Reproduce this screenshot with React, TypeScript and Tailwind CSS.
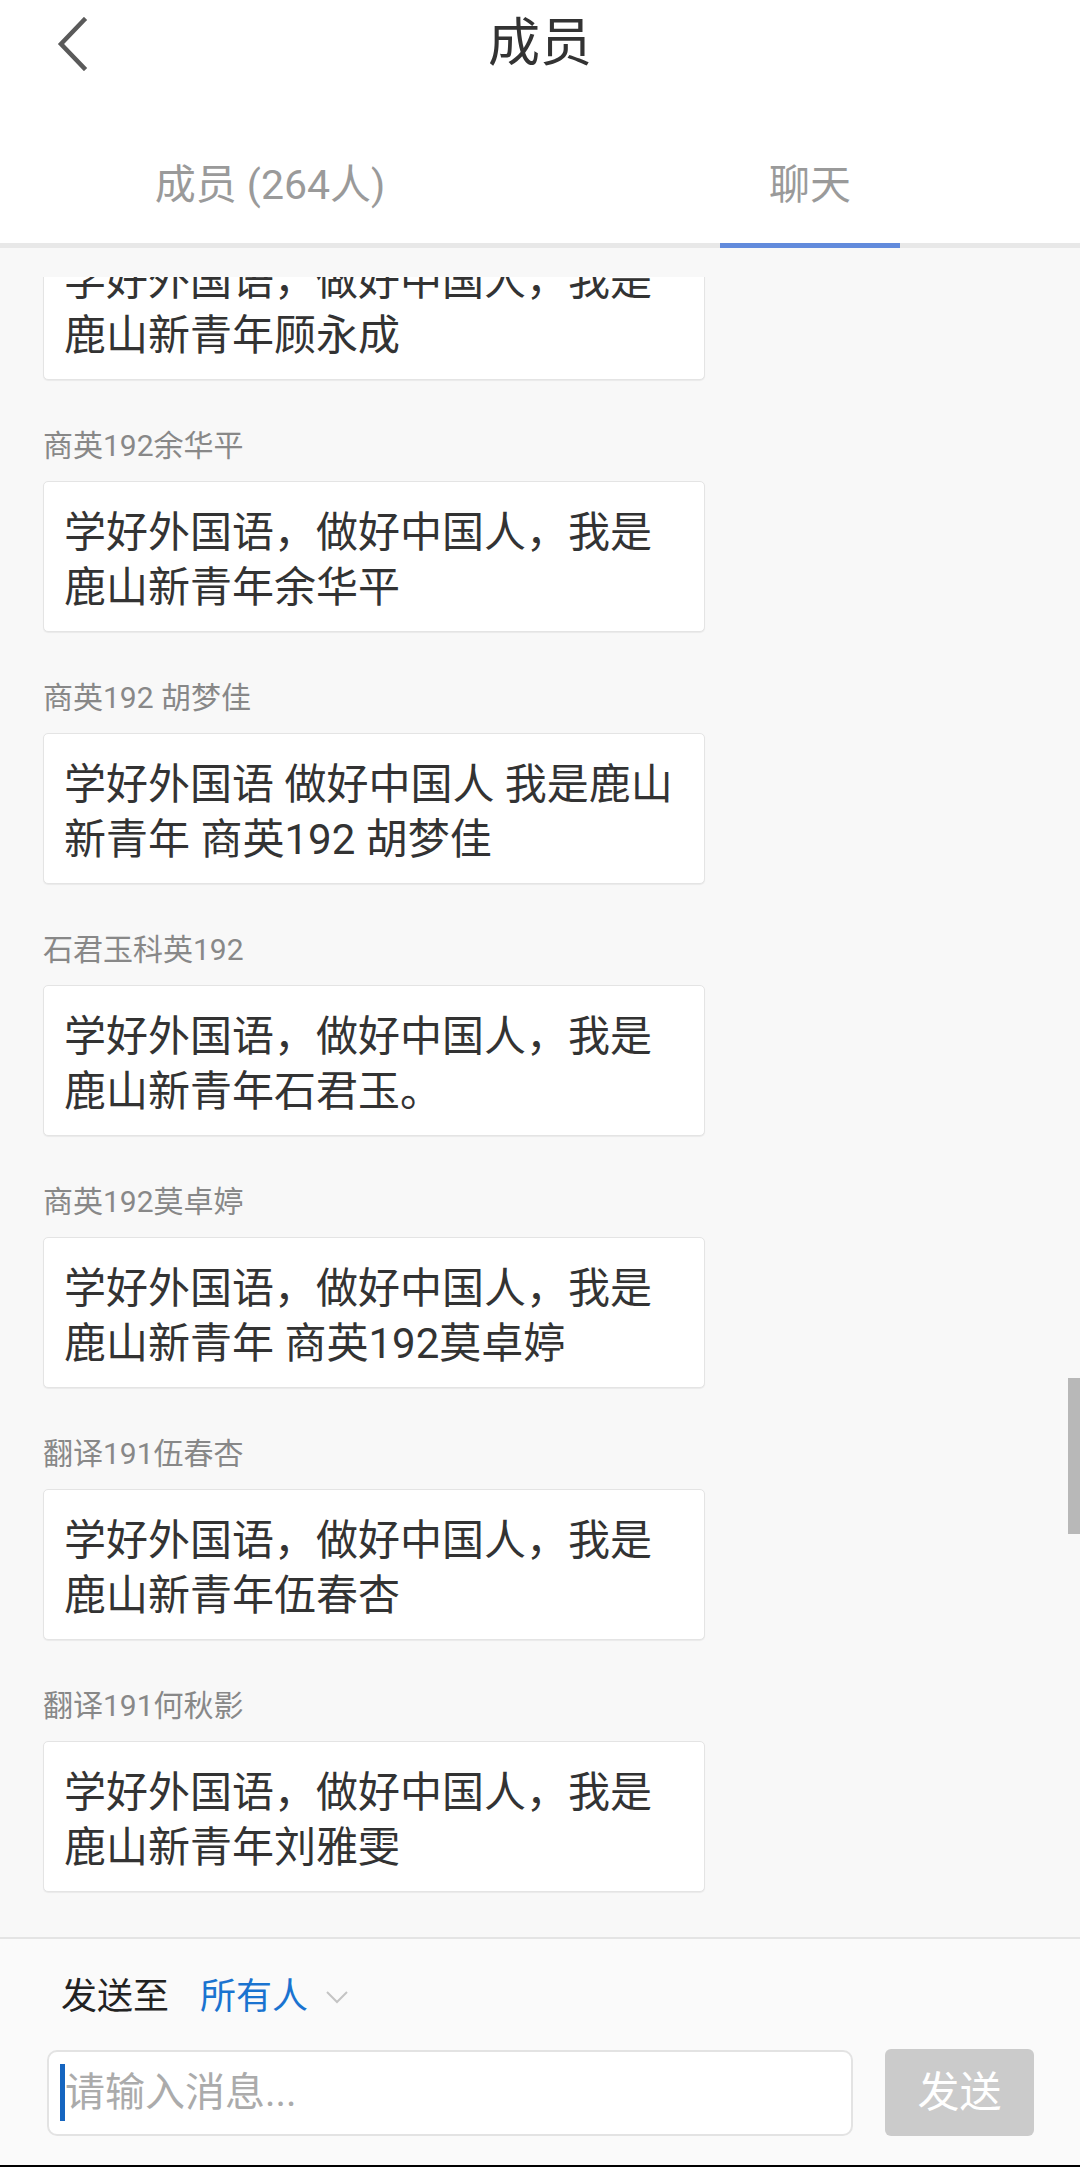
import React from 'react';

interface Message {
  sender: string;
  text: string;
}

const messages: Message[] = [
  { sender: '商英192余华平', text: '学好外国语，做好中国人，我是鹿山新青年余华平' },
  { sender: '商英192 胡梦佳', text: '学好外国语 做好中国人 我是鹿山新青年 商英192 胡梦佳' },
  { sender: '石君玉科英192', text: '学好外国语，做好中国人，我是鹿山新青年石君玉。' },
  { sender: '商英192莫卓婷', text: '学好外国语，做好中国人，我是鹿山新青年 商英192莫卓婷' },
  { sender: '翻译191伍春杏', text: '学好外国语，做好中国人，我是鹿山新青年伍春杏' },
  { sender: '翻译191何秋影', text: '学好外国语，做好中国人，我是鹿山新青年刘雅雯' },
];

const font = "font-['Roboto','Noto_Sans_CJK_SC',sans-serif]";

function Bubble({ text }: { text: string }) {
  return (
    <div className="w-[662px] rounded-[5px] border border-[#e4e4e4] bg-white px-[20px] pt-[23px] pb-[16px] text-[42px] leading-[55px] text-[#333] shadow-[0_1px_1px_rgba(0,0,0,0.06)]">
      {text}
    </div>
  );
}

export default function App() {
  return (
    <div className={`relative flex h-[2167px] w-[1080px] flex-col overflow-hidden bg-[#f8f8f8] ${font}`}>
      {/* Header */}
      <div className="shrink-0 bg-white">
        <div className="grid h-[88px] grid-cols-[1fr_auto_1fr] items-center">
          <div className="pl-[55px]">
            <svg width="34" height="54" viewBox="0 0 34 54" fill="none">
              <path d="M29 3 L6 27 L29 51" stroke="#5a5a5a" strokeWidth="4.5" strokeLinecap="square" />
            </svg>
          </div>
          <div className="text-[52px] leading-[60px] text-[#333]">成员</div>
          <div />
        </div>
        <div className="flex h-[160px]">
          <div className="flex flex-1 flex-col items-center justify-end">
            <div className="mb-[34px] text-[41px] leading-[48px] text-[#9a9a9a]">成员 (264人)</div>
            <div className="h-[5px] w-full bg-[#e8e8e8]" />
          </div>
          <div className="flex flex-1 flex-col items-center justify-end">
            <div className="mb-[34px] text-[41px] leading-[48px] text-[#9a9a9a]">聊天</div>
            <div className="flex h-[5px] w-full justify-center bg-[#e8e8e8]">
              <div className="h-full w-[180px] bg-[#628bdc]" />
            </div>
          </div>
        </div>
      </div>

      {/* Messages */}
      <div className="flex min-h-0 flex-1 flex-col">
        <div className="h-[29px] shrink-0" />
        <div className="min-h-0 flex-1 overflow-hidden">
          <div className="-mt-[48px] pl-[43px]">
            <div className="mb-[46px]">
              <Bubble text="学好外国语，做好中国人，我是鹿山新青年顾永成" />
            </div>
            {messages.map((m, i) => (
              <div key={i} className="mb-[46px]">
                <div className="mb-[15px] text-[30px] leading-[40px] text-[#888]">{m.sender}</div>
                <Bubble text={m.text} />
              </div>
            ))}
          </div>
        </div>
      </div>

      {/* Bottom input bar */}
      <div className="shrink-0 border-t-2 border-[#e4e4e4] bg-[#fafafa]">
        <div className="flex items-center pt-[34px] pl-[61px] text-[36px] leading-[48px]">
          <span className="text-[#222]">发送至</span>
          <span className="ml-[31px] text-[#1a73d0]">所有人</span>
          <svg className="ml-[17px]" width="24" height="14" viewBox="0 0 24 14" fill="none">
            <path d="M2 2 L12 12 L22 2" stroke="#c4c4c4" strokeWidth="2" />
          </svg>
        </div>
        <div className="mt-[28px] flex items-center gap-[32px] pl-[47px]">
          <div className="flex h-[86px] w-[806px] items-center rounded-[10px] border-2 border-[#e3e3e3] bg-white pl-[11px]">
            <div className="h-[57px] w-[5px] bg-[#1565c0]" />
            <span className="text-[40px] leading-[48px] text-[#ababab]">请输入消息...</span>
          </div>
          <button className="flex h-[87px] w-[149px] items-center justify-center rounded-[6px] bg-[#cbcbcb] text-[42px] leading-[50px] text-white">
            发送
          </button>
        </div>
        <div className="h-[29px]" />
        <div className="h-[2px] bg-black" />
      </div>

      {/* Scroll indicator */}
      <div className="absolute right-0 top-[1378px] h-[156px] w-[12px] bg-[#b8b8b8]" />
    </div>
  );
}
